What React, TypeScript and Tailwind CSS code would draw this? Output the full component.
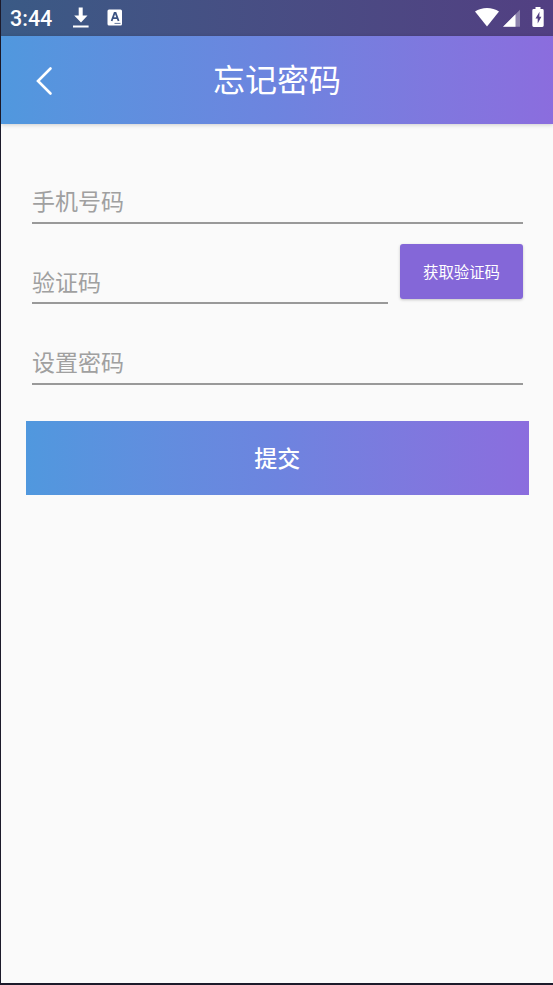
import type { ReactNode } from 'react'

function StatusBar() {
  return (
    <div className="flex h-9 shrink-0 items-center bg-linear-to-r from-[#3a5a85] to-[#523f82] pl-[9px] text-white">
      <span className="w-[62.5px] pt-px font-[Roboto] text-[21.5px] leading-9 font-medium">3:44</span>
      <svg className="h-9 w-4" viewBox="0 0 16 36" fill="currentColor">
        <path d="M5.7 7.5h4v8h4.8L8 22.5 1.2 15.5h4.5zM0 25.4h15.6v2H0z" />
      </svg>
      <svg className="ml-[18px] h-9 w-4" viewBox="0 0 16 36">
        <rect x="0.5" y="9.5" width="14.5" height="16" rx="1.5" fill="white" />
        <path d="M4.6 21l3-8h1l3 8M5.6 18.2h5" fill="none" stroke="#3c5483" strokeWidth="1.8" />
        <path d="M7.5 23.4h6" stroke="#3c5483" strokeWidth="0.8" />
      </svg>
      <svg className="ml-auto h-9 w-[79px]" viewBox="474 0 79 36" fill="currentColor">
        <path d="M475 11.6C481.5 6.7 492.5 6.7 499 11.6L487 26.5z" />
        <path d="M503 26.7L520 9.7v17z" opacity="0.35" />
        <path d="M503 26.7L515.5 14.2v12.5z" />
        <path d="M535.5 7h5v2h1.8q1.4 0 1.4 1.4v15.2q0 1.4-1.4 1.4h-8.6q-1.4 0-1.4-1.4V10.4q0-1.4 1.4-1.4h1.8z" />
        <path d="M539.5 11.8l-4 6.8h2.2v4.9l3.7-6.7h-2.1z" fill="#523f82" />
      </svg>
    </div>
  )
}

function Header() {
  return (
    <header className="z-10 grid h-[87.5px] shrink-0 grid-cols-[80px_1fr_80px] items-center bg-linear-to-r from-[#5098de] via-[#6d84df] to-[#8b6dde] text-white shadow-[0_1px_4px_rgba(0,0,0,0.18)]">
      <button type="button" aria-label="返回" className="pl-[34px]">
        <svg className="h-8 w-5" viewBox="0 0 20 32" fill="none" stroke="currentColor" strokeWidth="2.6" strokeLinecap="round">
          <path d="M15.5 4.5L3 17l12.5 12.5" />
        </svg>
      </button>
      <h1 className="pb-[3px] text-center text-[32px] leading-[48px] font-normal">忘记密码</h1>
    </header>
  )
}

function Field({ label, children }: { label: string; children?: ReactNode }) {
  return (
    <div className="flex h-[80.5px] items-end">
      <input
        type="text"
        placeholder={label}
        className="h-[46px] min-w-0 flex-1 border-b-2 border-[#999999] bg-transparent pt-px text-[23px] leading-[40px] font-normal text-[#444444] outline-none placeholder:text-[#a0a0a0]"
      />
      {children}
    </div>
  )
}

export default function App() {
  return (
    <div className="h-[985px] bg-[#1c1a2b] pb-[2px] pl-px font-['Noto_Sans_CJK_SC',sans-serif]">
      <main className="flex h-[983px] flex-col bg-[#fafafa]">
        <StatusBar />
        <Header />
        <form className="flex flex-col pt-[19.5px]" onSubmit={(e) => e.preventDefault()}>
          <div className="mr-[30px] ml-[31px]">
            <Field label="手机号码" />
            <Field label="验证码">
              <button
                type="button"
                className="mb-[5px] ml-3 h-[55px] w-[123px] rounded-[3px] bg-[#8467d8] pt-px text-[15.4px] text-white shadow-[0_1px_3px_rgba(0,0,0,0.22)]"
              >
                获取验证码
              </button>
            </Field>
            <Field label="设置密码" />
          </div>
          <button
            type="submit"
            className="mt-[36.5px] mr-6 ml-[24.5px] h-[74px] bg-linear-to-r from-[#5098de] via-[#6d84df] to-[#8b6dde] pb-[2px] text-[23px] font-medium text-white"
          >
            提交
          </button>
        </form>
      </main>
    </div>
  )
}
